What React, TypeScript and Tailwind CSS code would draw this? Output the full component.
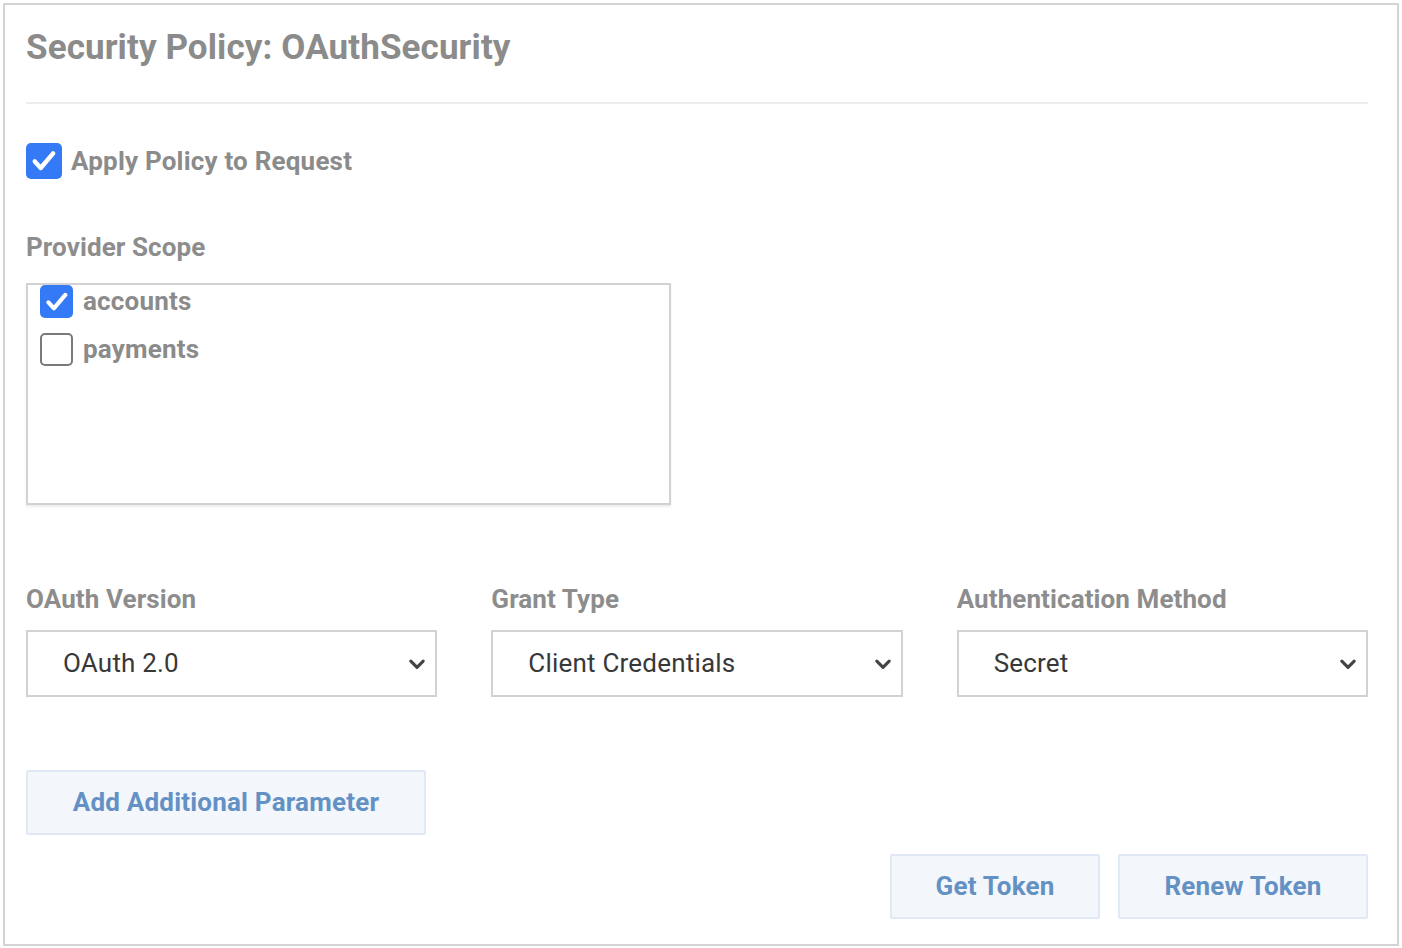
import { useState } from 'react';

function CheckBox({ checked, size }: { checked: boolean; size: number }) {
  return (
    <span
      className={
        checked
          ? 'flex shrink-0 items-center justify-center rounded-[5px] bg-[#3479f6]'
          : 'flex shrink-0 items-center justify-center rounded-[5px] border-2 border-[#7a7a7a] bg-white'
      }
      style={{ width: size, height: size }}
    >
      {checked && (
        <svg viewBox="0 0 24 24" className="h-[72%] w-[72%]" fill="none">
          <path d="M3.5 12.5l5.5 6L20.5 5" stroke="white" strokeWidth="4.2" strokeLinecap="round" strokeLinejoin="round" />
        </svg>
      )}
    </span>
  );
}

function Select({ label, value }: { label: string; value: string }) {
  return (
    <div className="flex flex-col">
      <div className="h-[30px] text-[26px] font-bold leading-[30px] tracking-[0.1px] text-[#8d8d8d]">{label}</div>
      <div className="mt-[16px] flex h-[67px] items-center justify-between border-2 border-[#d2d2d2] bg-white pl-[35px] pr-[9px]">
        <span className="text-[26px] tracking-[0.2px] text-[#383838]">{value}</span>
        <svg viewBox="0 0 16 16" className="h-[18px] w-[18px]" fill="none">
          <path d="M2.5 5.5L8 11l5.5-5.5" stroke="#444" strokeWidth="2.8" strokeLinecap="round" strokeLinejoin="round" />
        </svg>
      </div>
    </div>
  );
}

function SoftButton({ children, className }: { children: string; className: string }) {
  return (
    <button
      type="button"
      className={
        'flex h-[65px] items-center justify-center rounded-[2px] border-2 border-[#dfe8f4] bg-[#f3f6fb] text-[26px] font-bold tracking-[0.2px] text-[#6391c4] ' +
        className
      }
    >
      {children}
    </button>
  );
}

export default function App() {
  const [scopes] = useState([
    { name: 'accounts', selected: true },
    { name: 'payments', selected: false },
  ]);

  return (
    <div className="h-[948px] w-[1402px] bg-white p-[3px] font-['Roboto',sans-serif]">
      <div className="flex h-[943px] w-[1396px] flex-col border-2 border-[#d4d4d4] pb-[25px] pl-[21px] pr-[29px]">
        {/* header */}
        <div className="border-b-2 border-[#ececec] pb-[33px] pt-[22px]">
          <h1 className="h-[42px] text-[35px] font-bold leading-[42px] tracking-[0.1px] text-[#8b8b8b]">
            Security Policy: OAuthSecurity
          </h1>
        </div>

        <label className="mt-[39px] flex h-[36px] items-center gap-[9px]">
          <CheckBox checked size={36} />
          <span className="text-[26px] font-bold tracking-[0.2px] text-[#8b8b8b]">Apply Policy to Request</span>
        </label>

        <div className="mt-[53px] h-[30px] text-[26px] font-bold leading-[30px] tracking-[0.1px] text-[#8d8d8d]">Provider Scope</div>
        <div className="mt-[21px] flex h-[222px] w-[645px] flex-col gap-[15px] border-2 border-[#d2d2d2] pl-[12px] shadow-[0_2px_2px_rgba(0,0,0,0.08)]">
          {scopes.map((s) => (
            <div key={s.name} className="flex h-[33px] items-center gap-[10px]">
              <CheckBox checked={s.selected} size={33} />
              <span className="text-[26px] font-bold tracking-[0.2px] text-[#8b8b8b]">{s.name}</span>
            </div>
          ))}
        </div>

        <div className="mt-[79px] grid grid-cols-3 gap-[54px]">
          <Select label="OAuth Version" value="OAuth 2.0" />
          <Select label="Grant Type" value="Client Credentials" />
          <Select label="Authentication Method" value="Secret" />
        </div>

        <SoftButton className="mt-[73px] w-[400px]">Add Additional Parameter</SoftButton>

        <div className="mt-[19px] flex justify-end gap-[18px]">
          <SoftButton className="w-[210px]">Get Token</SoftButton>
          <SoftButton className="w-[250px]">Renew Token</SoftButton>
        </div>
      </div>
    </div>
  );
}
